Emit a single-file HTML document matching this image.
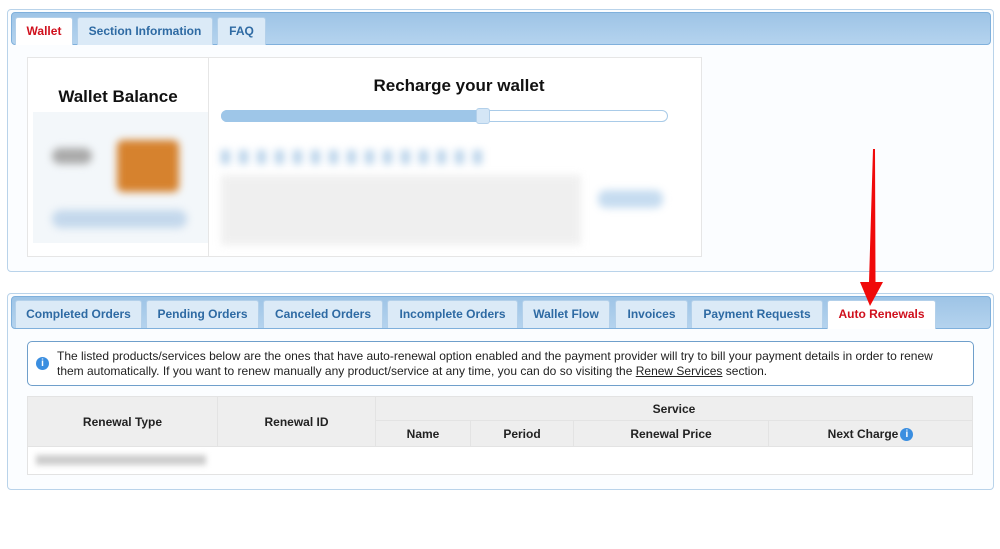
<!DOCTYPE html>
<html><head><meta charset="utf-8"><style>
*{box-sizing:border-box;margin:0;padding:0}
body{width:1000px;height:549px;background:#fff;font-family:"Liberation Sans",Arial,sans-serif;position:relative;overflow:hidden}
.abs{position:absolute}
.panel{position:absolute;border:1px solid #b9d3ea;border-radius:4px;background:#fbfdff}
.bar{position:absolute;background:linear-gradient(#9ec4e6,#b4d3ee);border:1px solid #7fb0dc;border-radius:4px}
.tab{position:absolute;background:#dbeaf7;border:1px solid #b3d0ea;border-bottom:none;border-radius:3px 3px 0 0;color:#2e6aa3;font-weight:bold;font-size:12px;text-align:center;line-height:27px}
.tab.act{background:#fff;color:#d0101d}
.blur{position:absolute;filter:blur(4px)}
th{font-size:12px;color:#222;font-weight:bold;background:#eeeeee;border:1px solid #e3e3e3}
table{border-collapse:collapse;position:absolute;left:27px;top:396px;width:946px}
</style></head><body>
<div class="panel" style="left:7px;top:9px;width:987px;height:263px"></div>
<div class="bar" style="left:11px;top:12px;width:980px;height:33px"></div>
<div class="tab act" style="left:15px;top:17px;width:58px;height:28px">Wallet</div>
<div class="tab" style="left:77px;top:17px;width:136px;height:28px">Section Information</div>
<div class="tab" style="left:217px;top:17px;width:49px;height:28px">FAQ</div>

<div class="abs" style="left:27px;top:57px;width:675px;height:200px;border:1px solid #e6e6e6;background:#fff"></div>
<div class="abs" style="left:208px;top:57px;width:1px;height:200px;background:#e6e6e6"></div>
<div class="abs" style="left:27px;top:87px;width:182px;text-align:center;font-size:17px;font-weight:bold;color:#111">Wallet Balance</div>
<div class="abs" style="left:210px;top:76px;width:498px;text-align:center;font-size:17px;font-weight:bold;color:#111">Recharge your wallet</div>
<div class="abs" style="left:33px;top:112px;width:175px;height:131px;background:#f3f7fa"></div>
<div class="blur" style="left:117px;top:140px;width:62px;height:52px;background:#d6822e;border-radius:6px"></div>
<div class="blur" style="left:52px;top:148px;width:40px;height:16px;background:#aaa;border-radius:8px"></div>
<div class="blur" style="left:52px;top:210px;width:135px;height:18px;background:#c4d8ec;border-radius:9px"></div>
<div class="abs" style="left:221px;top:110px;width:447px;height:12px;border:1px solid #a9cbe8;border-radius:6px;background:#fff"></div>
<div class="abs" style="left:221px;top:110px;width:262px;height:12px;background:#9ec6e8;border-radius:6px 0 0 6px"></div>
<div class="abs" style="left:476px;top:108px;width:14px;height:16px;background:#d4e6f6;border:1px solid #b3d0ea;border-radius:3px"></div>
<div class="blur" style="left:221px;top:150px;width:265px;height:14px;background:repeating-linear-gradient(90deg,#b8d2ea 0 9px,transparent 9px 18px)"></div>
<div class="blur" style="left:221px;top:175px;width:360px;height:70px;background:#ececec;opacity:.8"></div>
<div class="blur" style="left:598px;top:190px;width:65px;height:18px;background:#c6dcf0;border-radius:8px"></div>

<div class="panel" style="left:7px;top:293px;width:987px;height:197px"></div>
<div class="bar" style="left:11px;top:296px;width:980px;height:33px"></div>
<div class="tab" style="left:15px;top:300px;width:127px;height:28px">Completed Orders</div>
<div class="tab" style="left:146px;top:300px;width:113px;height:28px">Pending Orders</div>
<div class="tab" style="left:263px;top:300px;width:120px;height:28px">Canceled Orders</div>
<div class="tab" style="left:387px;top:300px;width:131px;height:28px">Incomplete Orders</div>
<div class="tab" style="left:522px;top:300px;width:88px;height:28px">Wallet Flow</div>
<div class="tab" style="left:615px;top:300px;width:73px;height:28px">Invoices</div>
<div class="tab" style="left:691px;top:300px;width:132px;height:28px">Payment Requests</div>
<div class="tab act" style="left:827px;top:300px;width:109px;height:29px">Auto Renewals</div>

<div class="abs" style="left:27px;top:341px;width:947px;height:45px;border:1px solid #6f9fcb;border-radius:5px;background:#fff"></div>
<div class="abs" style="left:36px;top:357px;width:13px;height:13px;border-radius:50%;background:#3a8ee0;color:#fff;font-size:10px;font-weight:bold;text-align:center;line-height:13px">i</div>
<div class="abs" style="left:57px;top:349px;width:885px;font-size:12px;line-height:15px;color:#222">The listed products/services below are the ones that have auto-renewal option enabled and the payment provider will try to bill your payment details in order to renew them automatically. If you want to renew manually any product/service at any time, you can do so visiting the <u>Renew Services</u> section.</div>

<table>
<tr style="height:24px"><th rowspan="2" style="width:190px">Renewal Type</th><th rowspan="2" style="width:158px">Renewal ID</th><th colspan="4">Service</th></tr>
<tr style="height:26px"><th style="width:95px">Name</th><th style="width:103px">Period</th><th style="width:195px">Renewal Price</th><th>Next Charge<span style="display:inline-block;margin-left:2px;width:13px;height:13px;border-radius:50%;background:#3a8ee0;color:#fff;font-size:10px;line-height:13px;vertical-align:1px">i</span></th></tr>
<tr style="height:28px"><td colspan="6" style="border:1px solid #e3e3e3;background:#fff"></td></tr>
</table>
<div class="blur" style="left:36px;top:455px;width:170px;height:10px;background:#ccc;filter:blur(3px)"></div>

<svg class="abs" style="left:855px;top:145px" width="35" height="165" viewBox="0 0 35 165">
<polygon points="18,4 20,4 20.5,137 28,137 15,161 5,137 14,137" fill="#f00a0a"/>
</svg>
</body></html>
